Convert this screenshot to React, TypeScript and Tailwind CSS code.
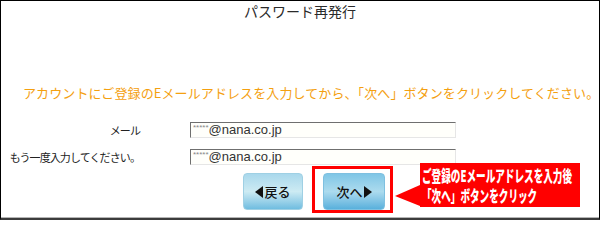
import React from 'react';

const jp = '[font-family:"Noto_Sans_CJK_JP","Noto_Sans",sans-serif]';

function FakeInput() {
  return (
    <div className="flex h-[16px] w-[266px] items-center border border-t-[#6f6f6f] border-l-[#6f6f6f] border-r-[#e6e6e6] border-b-[#e6e6e6] bg-[#fffffb] pl-[2px]">
      <span className="self-start pt-[1px] font-['Liberation_Sans',Arial,sans-serif] text-[8px] leading-[8px] text-[#888]">*****</span>
      <span className="font-['Liberation_Sans',Arial,sans-serif] text-[13px] leading-[14px] text-[#333]">@nana.co.jp</span>
    </div>
  );
}

function Arrow({ dir }: { dir: 'left' | 'right' }) {
  return (
    <svg width="8" height="12" viewBox="0 0 8 12" className="shrink-0">
      {dir === 'left' ? <polygon points="8,0 8,12 0,6" fill="#111" /> : <polygon points="0,0 0,12 8,6" fill="#111" />}
    </svg>
  );
}

export default function App() {
  return (
    <div className={`flex h-[220px] w-[600px] flex-col border-x border-t border-b-2 border-x-black border-t-black border-b-[#3c3c3c] bg-white ${jp}`}>
      <h1 className="h-[20px] text-center text-[14px] leading-[20px] font-normal text-[#2a2a2a]">パスワード再発行</h1>

      <p className="mt-[63px] h-[18px] pl-[22px] text-[13px] leading-[18px] tracking-[0.1px] whitespace-nowrap text-[#f4a010]">
        アカウントにご登録のEメールアドレスを入力してから、「次へ」ボタンをクリックしてください。
      </p>

      <div className="mt-[20px] grid grid-cols-[139px_266px] items-center gap-x-[50px] gap-y-[11px]">
        <span className="text-right text-[11px] leading-[16px] tracking-[-0.9px] text-[#222]">メール</span>
        <FakeInput />
        <span className="text-right text-[11px] leading-[16px] tracking-[-0.9px] whitespace-nowrap text-[#222]">もう一度入力してください。</span>
        <FakeInput />
      </div>

      <div className="flex items-start">
        <button className="mt-[8px] ml-[242px] flex h-[37px] w-[60px] items-center justify-center gap-[1px] rounded-[4px] border border-[#9fd0e4] bg-linear-to-b from-[#a9d8ec] via-[#cdebf3] to-[#6fbde0] text-[13px] font-medium text-[#111]">
          <Arrow dir="left" />
          <span>戻る</span>
        </button>

        <div className="mt-[1px] ml-[9px] h-[47px] w-[81px] border-[3px] border-[#ff0000] pt-[4px] pl-[8px]">
          <button className="flex h-[37px] w-[62px] items-center justify-center gap-[1px] rounded-[4px] border border-[#7fc0e0] bg-linear-to-b from-[#7fc6e6] via-[#acdbee] to-[#58b0dc] text-[13px] font-medium text-[#111]">
            <span>次へ</span>
            <Arrow dir="right" />
          </button>
        </div>

        <div className="mt-[-2px] ml-[2px] flex h-[44px]">
          <svg width="25" height="44" viewBox="0 0 25 44" className="shrink-0">
            <polygon points="0,33 25,22 25,43" fill="#ff0000" />
          </svg>
          <div className="h-[44px] w-[160px] overflow-hidden bg-[#ff0000] pt-[2px] pl-[2px] text-white">
            <div className="h-[20px] origin-left scale-x-[0.6] text-[16px] leading-[20px] font-black whitespace-nowrap">ご登録のEメールアドレスを入力後</div>
            <div className="h-[20px] origin-left scale-x-[0.6] text-[16px] leading-[20px] font-black whitespace-nowrap">「次へ」ボタンをクリック</div>
          </div>
        </div>
      </div>

      <div className="mt-auto h-[1px] bg-[#b5b5b5]" />
    </div>
  );
}
